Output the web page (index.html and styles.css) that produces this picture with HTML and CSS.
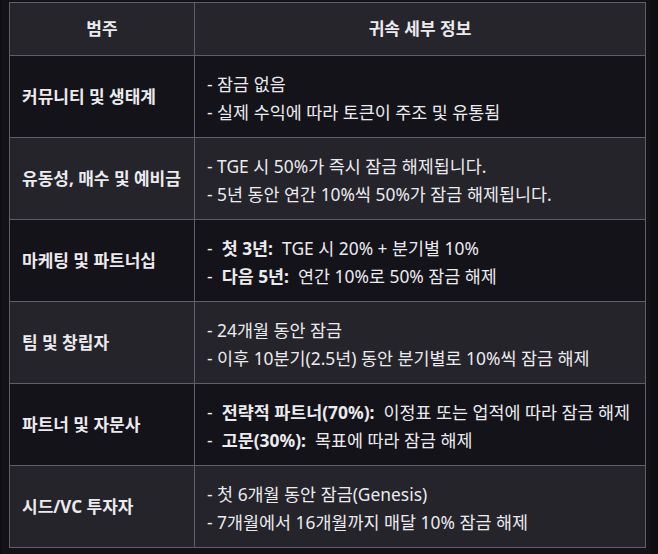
FILE: index.html
```html
<!DOCTYPE html>
<html lang="ko">
<head>
<meta charset="utf-8">
<title>귀속 세부 정보</title>
<link rel="stylesheet" href="styles.css">
</head>
<body>
<table class="vest">
  <colgroup><col class="c1"><col class="c2"></colgroup>
  <thead>
    <tr><th>범주</th><th>귀속 세부 정보</th></tr>
  </thead>
  <tbody>
    <tr>
      <td class="cat">커뮤니티 및 생태계</td>
      <td class="info"><div>- 잠금 없음</div><div>- 실제 수익에 따라 토큰이 주조 및 유통됨</div></td>
    </tr>
    <tr>
      <td class="cat">유동성, 매수 및 예비금</td>
      <td class="info"><div>- TGE 시 50%가 즉시 잠금 해제됩니다.</div><div>- 5년 동안 연간 10%씩 50%가 잠금 해제됩니다.</div></td>
    </tr>
    <tr>
      <td class="cat">마케팅 및 파트너십</td>
      <td class="info"><div>-&nbsp; <b>첫 3년:</b>&nbsp; TGE 시 20% + 분기별 10%</div><div>-&nbsp; <b>다음 5년:</b>&nbsp; 연간 10%로 50% 잠금 해제</div></td>
    </tr>
    <tr>
      <td class="cat">팀 및 창립자</td>
      <td class="info"><div>- 24개월 동안 잠금</div><div>- 이후 10분기(2.5년) 동안 분기별로 10%씩 잠금 해제</div></td>
    </tr>
    <tr>
      <td class="cat">파트너 및 자문사</td>
      <td class="info"><div>-&nbsp; <b>전략적 파트너(70%):</b>&nbsp; 이정표 또는 업적에 따라 잠금 해제</div><div>-&nbsp; <b>고문(30%):</b>&nbsp; 목표에 따라 잠금 해제</div></td>
    </tr>
    <tr>
      <td class="cat">시드/VC 투자자</td>
      <td class="info"><div>- 첫 6개월 동안 잠금(Genesis)</div><div>- 7개월에서 16개월까지 매달 10% 잠금 해제</div></td>
    </tr>
  </tbody>
</table>
</body>
</html>
```
FILE: styles.css
```css
html {
  background: #0e0d12;
}
body {
  margin: 0 8px 0 2px;
  padding: 2px 0 0 7px;
  min-height: 552px;
  background: #131218;
  color: #ebebee;
  font-family: "Noto Sans", "Noto Sans CJK KR", sans-serif;
  font-size: 17px;
}
.vest {
  border-collapse: collapse;
  table-layout: fixed;
  width: 636px;
}
.c1 { width: 185px; }
.c2 { width: 451px; }
.vest th,
.vest td {
  border: 1px solid #5e5f67;
  line-height: 28px;
}
.vest th {
  background: #26252c;
  font-weight: 700;
  text-align: center;
  padding: 12px 12px;
}
.vest tbody tr:nth-child(odd) { background: #141319; }
.vest tbody tr:nth-child(even) { background: #25242b; }
.vest td {
  padding: 13px 12px 12px;
  vertical-align: middle;
  white-space: nowrap;
}
.cat {
  font-weight: 700;
}
.vest td.info {
  font-size: 17.4px;
  padding-top: 14px;
  padding-bottom: 11px;
}
.info b {
  font-weight: 700;
}
```
